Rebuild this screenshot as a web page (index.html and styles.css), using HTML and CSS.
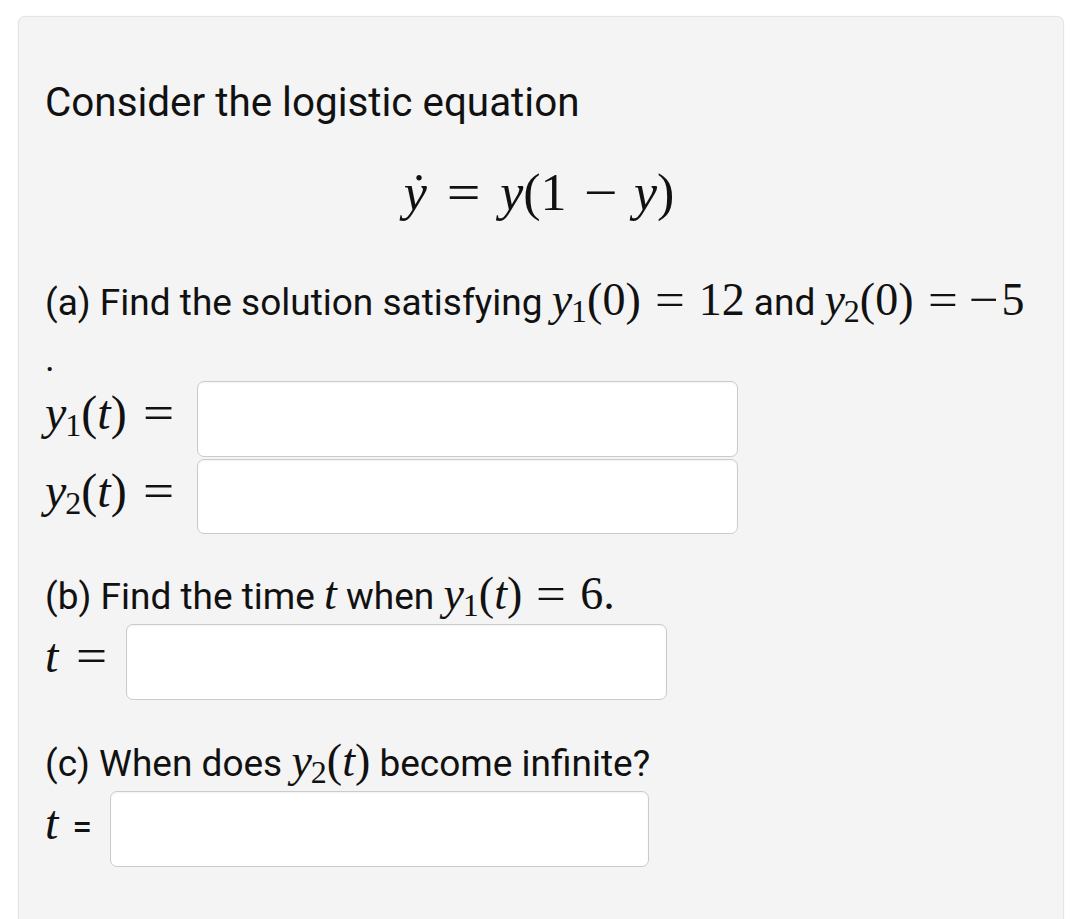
FILE: index.html
```html
<!DOCTYPE html>
<html>
<head>
<meta charset="utf-8">
<link rel="stylesheet" href="styles.css">
</head>
<body>
<div class="card">
  <p class="intro">Consider the logistic equation</p>
  <div class="display"><span class="m"><i>ẏ</i><span class="rel">=</span><i>y</i>(1<span class="bin">−</span><i>y</i>)</span></div>
  <p class="q qa">(a) Find the solution satisfying <span class="m"><i>y</i><sub>1</sub>(0)<span class="rel">=</span>12</span> and <span class="m"><i>y</i><sub>2</sub>(0)<span class="rel">=</span><span class="neg">−</span>5</span></p>
  <p class="q period">.</p>
  <div class="row row-a">
    <span class="label lab-y m"><i>y</i><sub>1</sub>(<i>t</i>)<span class="rel">=</span></span>
    <div class="box"></div>
  </div>
  <div class="row row-a2">
    <span class="label lab-y m"><i>y</i><sub>2</sub>(<i>t</i>)<span class="rel">=</span></span>
    <div class="box box-2"></div>
  </div>
  <p class="q qb">(b) Find the time <span class="m"><i>t</i></span> when <span class="m"><i>y</i><sub>1</sub>(<i>t</i>)<span class="rel">=</span>6.</span></p>
  <div class="row row-b">
    <span class="label lab-t m"><i>t</i><span class="rel">=</span></span>
    <div class="box"></div>
  </div>
  <p class="q qc">(c) When does <span class="m"><i>y</i><sub>2</sub>(<i>t</i>)</span> become infinite?</p>
  <div class="row row-c">
    <span class="label lab-tc"><span class="m"><i>t</i></span><span class="eq">=</span></span>
    <div class="box box-c"></div>
  </div>
</div>
</body>
</html>
```
FILE: styles.css
```css
html, body {
  margin: 0;
  padding: 0;
  background: #ffffff;
}
body {
  font-family: Roboto, "Liberation Sans", sans-serif;
  color: #111;
  overflow: hidden;
  height: 919px;
}
.card {
  margin: 16px 16px 0 18px;
  min-height: 960px;
  background: #f4f4f4;
  border: 1px solid #e4e4e4;
  border-radius: 7px;
  box-shadow: 0 0 2px rgba(0,0,0,0.06);
  padding: 62px 26px 0 26px;
  box-sizing: border-box;
}
p { margin: 0; }
.intro {
  font-size: 40.4px;
  line-height: 48px;
}
.q {
  font-size: 37px;
  line-height: 48px;
  white-space: nowrap;
}
.m {
  font-family: "Liberation Serif", "Times New Roman", serif;
  font-size: 46px;
  line-height: 48px;
  white-space: nowrap;
}
.m i { font-style: italic; }
.m sub {
  font-size: 32px;
  vertical-align: baseline;
  position: relative;
  top: 7px;
  line-height: 0;
  margin-left: -1px;
}
.rel, .bin, .neg {
  display: inline-block;
  transform: scaleX(1.15);
}
.rel { margin: 0 16px; }
.neg { margin: 0 4px 0 0; }
.display .m { font-size: 52px; }
.display .m .rel { margin: 0 22px; }
.display .m .bin { margin: 0 19px; }
.display {
  text-align: center;
  margin-top: 42px;
  line-height: 60px;
  padding-right: 4px;
}
.qa { margin-top: 41px; }
.period { margin-top: 8px; }
.row {
  display: flex;
  align-items: center;
}
.label {
  padding-bottom: 12px;
  white-space: nowrap;
}
.lab-y { font-size: 48px; }
.lab-y .rel { margin: 0 0 0 18px; }
.box {
  height: 76px;
  width: 541px;
  flex: none;
  box-sizing: border-box;
  background: #fff;
  border: 1.5px solid #cbcbcb;
  border-radius: 7px;
  box-shadow: inset 0 1px 2px rgba(0,0,0,0.05);
}
.row-a { margin-top: -2px; }
.lab-y { width: 152px; }
.row-a2 { margin-top: 2px; }
.box-2 { height: 75px; }
.qb { margin-top: 36px; }
.row-b { margin-top: 3px; }
.lab-t { width: 81px; font-size: 48px; }
.lab-t .rel { margin: 0 0 0 20px; }
.qc { margin-top: 37px; }
.row-c { margin-top: 3px; }
.lab-tc { width: 65px; }
.lab-tc .m { font-size: 48px; }
.eq { font-size: 36px; font-family: Roboto, sans-serif; margin-left: 14px; }
.box-c { width: 539px; }
```
